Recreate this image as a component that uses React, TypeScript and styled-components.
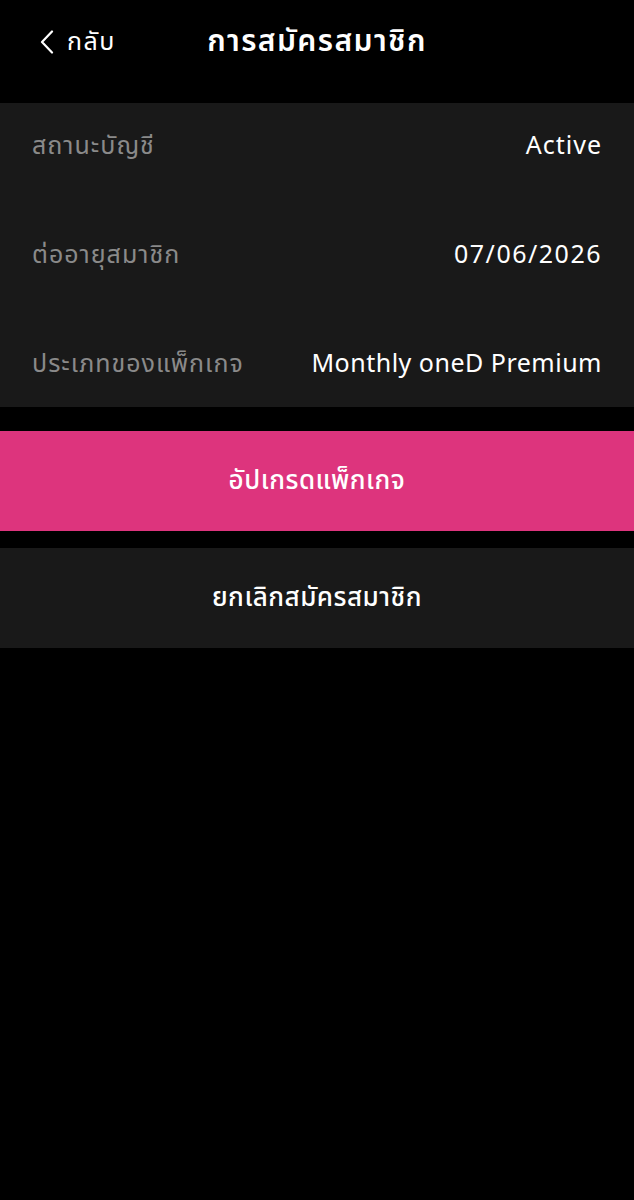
import React from "react";
import styled, { createGlobalStyle } from "styled-components";

const Global = createGlobalStyle`
  html, body { margin: 0; padding: 0; background: #000; }
  body { font-family: "Noto Sans Thai", "Noto Sans Thai Looped", "Noto Sans", "Open Sans", sans-serif; color: #fff; }
`;

const Page = styled.div`
  width: 634px;
  min-height: 1200px;
  background: #000;
  display: flex;
  flex-direction: column;
`;

const Header = styled.header`
  height: 103px;
  display: grid;
  grid-template-columns: 1fr auto 1fr;
  align-items: start;
  padding-top: 22px;
  box-sizing: border-box;
`;

const Back = styled.button`
  justify-self: start;
  display: flex;
  align-items: center;
  gap: 13px;
  margin-left: 40px;
  background: none;
  border: 0;
  padding: 0;
  color: #fff;
  font: inherit;
  font-size: 25px;
  letter-spacing: 1.5px;
  height: 40px;
  cursor: pointer;
`;

const Title = styled.h1`
  margin: 0;
  font-size: 30px;
  font-weight: 600;
  line-height: 40px;
  letter-spacing: 1.4px;
`;

const Card = styled.section`
  background: #191919;
  display: flex;
  flex-direction: column;
  gap: 23px;
`;

const Row = styled.div`
  height: 86px;
  display: flex;
  align-items: center;
  justify-content: space-between;
  padding: 0 32px;
`;

const Label = styled.span`
  color: #8a8a8a;
  font-size: 25px;
  letter-spacing: 1px;
`;

const Value = styled.span<{ $spacing?: number }>`
  color: #fff;
  font-size: 25px;
  letter-spacing: ${(p) => p.$spacing ?? 0.5}px;
`;

const Actions = styled.div`
  display: flex;
  flex-direction: column;
  gap: 17px;
  margin-top: 24px;
`;

const ActionButton = styled.button<{ $primary?: boolean }>`
  height: 100px;
  border: 0;
  width: 100%;
  background: ${(p) => (p.$primary ? "#dd347d" : "#191919")};
  color: #fff;
  font: inherit;
  font-size: 26px;
  font-weight: 500;
  letter-spacing: 0.5px;
  cursor: pointer;
`;

export default function App() {
  return (
    <>
      <Global />
      <Page>
        <Header>
          <Back>
            <svg width="14" height="24" viewBox="0 0 14 24" fill="none">
              <path d="M12 1.5 L2 12 L12 22.5" stroke="#fff" strokeWidth="2.2" strokeLinecap="round" strokeLinejoin="round" />
            </svg>
            กลับ
          </Back>
          <Title>การสมัครสมาชิก</Title>
          <div />
        </Header>
        <Card>
          <Row>
            <Label>สถานะบัญชี</Label>
            <Value $spacing={1}>Active</Value>
          </Row>
          <Row>
            <Label>ต่ออายุสมาชิก</Label>
            <Value $spacing={1.5}>07/06/2026</Value>
          </Row>
          <Row>
            <Label>ประเภทของแพ็กเกจ</Label>
            <Value>Monthly oneD Premium</Value>
          </Row>
        </Card>
        <Actions>
          <ActionButton $primary>อัปเกรดแพ็กเกจ</ActionButton>
          <ActionButton>ยกเลิกสมัครสมาชิก</ActionButton>
        </Actions>
      </Page>
    </>
  );
}
